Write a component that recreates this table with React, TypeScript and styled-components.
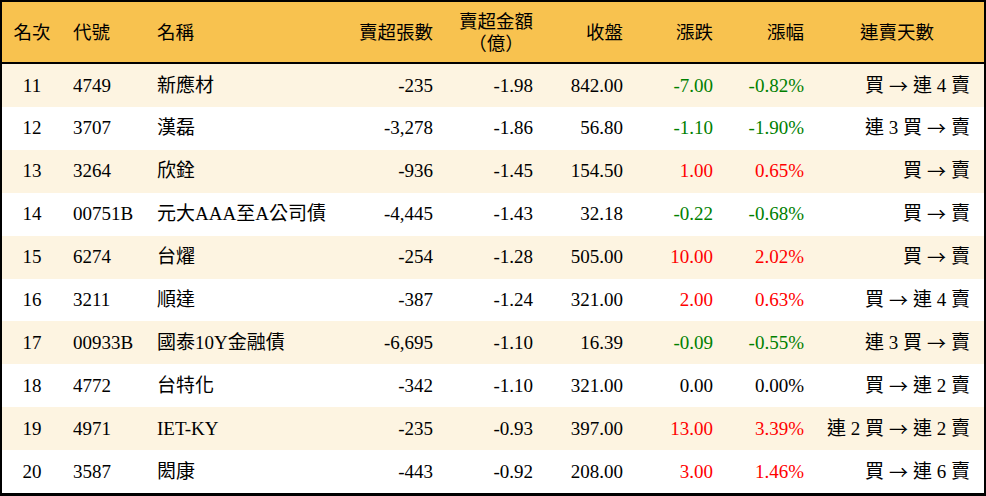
import React from "react";
import styled, { createGlobalStyle } from "styled-components";

const GlobalStyle = createGlobalStyle`
  html, body { margin: 0; padding: 0; background: #ffffff; }
  body { font-family: "Liberation Serif", "Noto Sans CJK TC", serif; }
`;

const COLS = "60px 83px 200px 100px 100px 90px 90px 91px 168px";

const Frame = styled.div`
  box-sizing: border-box;
  width: 986px;
  height: 496px;
  border: 2px solid #000;
  border-bottom-width: 3px;
  display: flex;
  flex-direction: column;
  font-family: "Liberation Serif", "Noto Sans CJK TC", serif;
  font-size: 19px;
  color: #000;
`;

const HeaderRow = styled.div`
  display: grid;
  grid-template-columns: ${COLS};
  height: 60px;
  background: #f8c24f;
  border-bottom: 2px solid #000;
  flex: none;
`;

const Body = styled.div`
  flex: 1;
  display: flex;
  flex-direction: column;
`;

const Row = styled.div<{ $alt: boolean }>`
  flex: 1;
  display: grid;
  grid-template-columns: ${COLS};
  background: ${(p) => (p.$alt ? "#fdf4e1" : "#ffffff")};
`;

type Align = "left" | "center" | "right";

const Cell = styled.div<{ $align: Align; $pl?: number; $pr?: number; $color?: string }>`
  display: flex;
  align-items: center;
  justify-content: ${(p) =>
    p.$align === "left" ? "flex-start" : p.$align === "right" ? "flex-end" : "center"};
  padding-left: ${(p) => p.$pl ?? 0}px;
  padding-right: ${(p) => p.$pr ?? 0}px;
  color: ${(p) => p.$color ?? "#000"};
  white-space: nowrap;
  line-height: 1.15;
`;

const HeadCell = styled(Cell)`
  text-align: center;
  font-family: "Noto Sans CJK TC", "Liberation Serif", serif;
  font-size: 18.5px;
`;

const HeadStack = styled.div`
  display: flex;
  flex-direction: column;
  align-items: center;
  margin-top: -2px;
`;

const HeadLine = styled.span`
  display: block;
  height: 22px;
  line-height: 22px;
`;

const Name = styled.span`
  font-family: "Liberation Serif", "Noto Sans CJK TC", serif;
`;

const Streak = styled.span`
  display: inline-flex;
  align-items: center;
  gap: 5px;
`;

const Arrow = styled.span`
  font-family: "Noto Sans CJK TC", sans-serif;
  font-size: 19px;
`;

type Stock = {
  rank: number;
  code: string;
  name: string;
  lots: string;
  amount: string;
  close: string;
  change: string;
  pct: string;
  streak: [string, string];
};

const data: Stock[] = [
  { rank: 11, code: "4749", name: "新應材", lots: "-235", amount: "-1.98", close: "842.00", change: "-7.00", pct: "-0.82%", streak: ["買", "連 4 賣"] },
  { rank: 12, code: "3707", name: "漢磊", lots: "-3,278", amount: "-1.86", close: "56.80", change: "-1.10", pct: "-1.90%", streak: ["連 3 買", "賣"] },
  { rank: 13, code: "3264", name: "欣銓", lots: "-936", amount: "-1.45", close: "154.50", change: "1.00", pct: "0.65%", streak: ["買", "賣"] },
  { rank: 14, code: "00751B", name: "元大AAA至A公司債", lots: "-4,445", amount: "-1.43", close: "32.18", change: "-0.22", pct: "-0.68%", streak: ["買", "賣"] },
  { rank: 15, code: "6274", name: "台燿", lots: "-254", amount: "-1.28", close: "505.00", change: "10.00", pct: "2.02%", streak: ["買", "賣"] },
  { rank: 16, code: "3211", name: "順達", lots: "-387", amount: "-1.24", close: "321.00", change: "2.00", pct: "0.63%", streak: ["買", "連 4 賣"] },
  { rank: 17, code: "00933B", name: "國泰10Y金融債", lots: "-6,695", amount: "-1.10", close: "16.39", change: "-0.09", pct: "-0.55%", streak: ["連 3 買", "賣"] },
  { rank: 18, code: "4772", name: "台特化", lots: "-342", amount: "-1.10", close: "321.00", change: "0.00", pct: "0.00%", streak: ["買", "連 2 賣"] },
  { rank: 19, code: "4971", name: "IET-KY", lots: "-235", amount: "-0.93", close: "397.00", change: "13.00", pct: "3.39%", streak: ["連 2 買", "連 2 賣"] },
  { rank: 20, code: "3587", name: "閎康", lots: "-443", amount: "-0.92", close: "208.00", change: "3.00", pct: "1.46%", streak: ["買", "連 6 賣"] },
];

const colorFor = (v: string) => {
  const n = parseFloat(v);
  if (n > 0) return "#ff0000";
  if (n < 0) return "#008000";
  return "#000000";
};

export default function App() {
  return (
    <>
      <GlobalStyle />
      <Frame>
        <HeaderRow>
          <HeadCell $align="center">名次</HeadCell>
          <HeadCell $align="left" $pl={11}>代號</HeadCell>
          <HeadCell $align="left" $pl={12}>名稱</HeadCell>
          <HeadCell $align="right" $pr={12}>賣超張數</HeadCell>
          <HeadCell $align="right" $pr={12}>
            <HeadStack>
              <HeadLine>賣超金額</HeadLine>
              <HeadLine>（億）</HeadLine>
            </HeadStack>
          </HeadCell>
          <HeadCell $align="right" $pr={12}>收盤</HeadCell>
          <HeadCell $align="right" $pr={12}>漲跌</HeadCell>
          <HeadCell $align="right" $pr={12}>漲幅</HeadCell>
          <HeadCell $align="center" $pr={6}>連賣天數</HeadCell>
        </HeaderRow>
        <Body>
          {data.map((s, i) => (
            <Row key={s.rank} $alt={i % 2 === 0}>
              <Cell $align="center">{s.rank}</Cell>
              <Cell $align="left" $pl={11}>{s.code}</Cell>
              <Cell $align="left" $pl={12}><Name>{s.name}</Name></Cell>
              <Cell $align="right" $pr={12}>{s.lots}</Cell>
              <Cell $align="right" $pr={12}>{s.amount}</Cell>
              <Cell $align="right" $pr={12}>{s.close}</Cell>
              <Cell $align="right" $pr={12} $color={colorFor(s.change)}>{s.change}</Cell>
              <Cell $align="right" $pr={12} $color={colorFor(s.pct)}>{s.pct}</Cell>
              <Cell $align="right" $pr={14}>
                <Streak>
                  <span>{s.streak[0]}</span>
                  <Arrow>→</Arrow>
                  <span>{s.streak[1]}</span>
                </Streak>
              </Cell>
            </Row>
          ))}
        </Body>
      </Frame>
    </>
  );
}
